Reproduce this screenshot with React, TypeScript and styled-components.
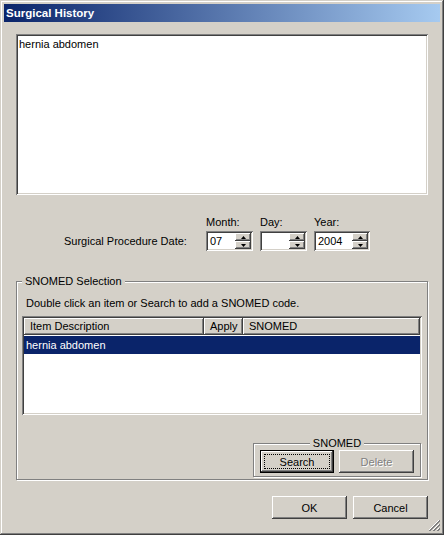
import React from 'react'
import styled, { createGlobalStyle } from 'styled-components'

const Color = {
  FACE: '#d4d0c8',
  LIGHT: '#ffffff',
  SHADOW: '#808080',
  DARK: '#404040',
  SELECT: '#0a246a',
  TITLE_FROM: '#0a246a',
  TITLE_TO: '#a6caf0',
}

const raised = `box-shadow: inset -1px -1px ${Color.DARK}, inset 1px 1px ${Color.LIGHT}, inset -2px -2px ${Color.SHADOW}, inset 2px 2px ${Color.FACE};`
const sunken = `box-shadow: inset 1px 1px ${Color.SHADOW}, inset -1px -1px ${Color.LIGHT}, inset 2px 2px ${Color.DARK}, inset -2px -2px ${Color.FACE};`

const GlobalStyle = createGlobalStyle`
  html, body {
    margin: 0;
    padding: 0;
    background: ${Color.FACE};
  }
  body {
    font-family: 'Liberation Sans', Arial, sans-serif;
    font-size: 11px;
    color: #000;
  }
`

type SpinProps = {
  value: string
  width: number
}

const SpinBox: React.FC<SpinProps> = (props) => {
  return (
    <SpinWrap width={props.width}>
      <SpinValue>{props.value}</SpinValue>
      <SpinButtons>
        <SpinButton>
          <svg width="5" height="3" viewBox="0 0 5 3">
            <path d="M2.5 0 L5 3 L0 3 Z" fill="#000" />
          </svg>
        </SpinButton>
        <SpinButton>
          <svg width="5" height="3" viewBox="0 0 5 3">
            <path d="M0 0 L5 0 L2.5 3 Z" fill="#000" />
          </svg>
        </SpinButton>
      </SpinButtons>
    </SpinWrap>
  )
}

const App: React.FC = () => {
  return (
    <>
      <GlobalStyle />
      <Window>
        <TitleBar>Surgical History</TitleBar>
        <Body>
          <TextBox>hernia abdomen</TextBox>

          <DateRow>
            <DateLabel>Surgical Procedure Date:</DateLabel>
            <DateField>
              <FieldLabel>Month:</FieldLabel>
              <SpinBox value="07" width={47} />
            </DateField>
            <DateField>
              <FieldLabel>Day:</FieldLabel>
              <SpinBox value="" width={47} />
            </DateField>
            <DateField>
              <FieldLabel>Year:</FieldLabel>
              <SpinBox value="2004" width={56} />
            </DateField>
          </DateRow>

          <GroupBox>
            <Legend>SNOMED Selection</Legend>
            <Hint>Double click an item or Search to add a SNOMED code.</Hint>
            <ListView>
              <ListHeader>
                <HeaderCell width={180}>Item Description</HeaderCell>
                <HeaderCell width={39}>Apply</HeaderCell>
                <HeaderCell>SNOMED</HeaderCell>
              </ListHeader>
              <ListBody>
                <ListRow selected>hernia abdomen</ListRow>
              </ListBody>
            </ListView>
            <InnerGroup>
              <InnerLegend>SNOMED</InnerLegend>
              <ButtonRow>
                <Button width={74} focused>
                  <FocusRect>Search</FocusRect>
                </Button>
                <Button width={75} disabled>
                  Delete
                </Button>
              </ButtonRow>
            </InnerGroup>
          </GroupBox>

          <Footer>
            <Button width={75}>OK</Button>
            <Button width={75}>Cancel</Button>
          </Footer>
        </Body>
        <Grip>
          <svg width="12" height="12" viewBox="0 0 12 12">
            <path d="M11 1 L1 11 M11 5 L5 11 M11 9 L9 11" stroke="#fff" strokeWidth="1" />
            <path d="M12 1 L1 12 M12 2 L2 12 M12 5 L5 12 M12 6 L6 12 M12 9 L9 12 M12 10 L10 12" stroke="#808080" strokeWidth="1" />
          </svg>
        </Grip>
      </Window>
    </>
  )
}

const Window = styled.div`
  position: relative;
  width: 444px;
  height: 535px;
  box-sizing: border-box;
  padding: 4px;
  display: flex;
  flex-direction: column;
  background: ${Color.FACE};
  box-shadow: inset -1px -1px ${Color.DARK}, inset 1px 1px ${Color.FACE},
    inset -2px -2px ${Color.SHADOW}, inset 2px 2px ${Color.LIGHT};
`
const TitleBar = styled.div`
  height: 18px;
  line-height: 18px;
  padding-left: 2px;
  font-weight: bold;
  font-size: 11.5px;
  color: #fff;
  background: linear-gradient(to right, ${Color.TITLE_FROM}, ${Color.TITLE_TO});
`
const Body = styled.div`
  flex: 1;
  display: flex;
  flex-direction: column;
  padding: 12px 12px 0 12px;
`
const TextBox = styled.div`
  height: 161px;
  box-sizing: border-box;
  padding: 4px 3px;
  background: #fff;
  ${sunken}
`
const DateRow = styled.div`
  display: flex;
  align-items: flex-end;
  gap: 7px;
  margin-top: 21px;
  padding-left: 48px;
`
const DateLabel = styled.div`
  width: 135px;
  height: 20px;
  line-height: 20px;
`
const DateField = styled.div`
  display: flex;
  flex-direction: column;
  gap: 2px;
`
const FieldLabel = styled.div`
  height: 13px;
  line-height: 13px;
`
const SpinWrap = styled.div<{ width: number }>`
  width: ${({ width }) => width}px;
  height: 20px;
  box-sizing: border-box;
  padding: 2px;
  display: flex;
  background: #fff;
  ${sunken}
`
const SpinValue = styled.div`
  flex: 1;
  padding-left: 2px;
  line-height: 16px;
`
const SpinButtons = styled.div`
  width: 16px;
  display: flex;
  flex-direction: column;
`
const SpinButton = styled.div`
  flex: 1;
  display: flex;
  align-items: center;
  justify-content: center;
  background: ${Color.FACE};
  ${raised}
`
const GroupBox = styled.fieldset`
  margin: 23px 0 0 0;
  padding: 0 5px 1px 5px;
  height: 206px;
  box-sizing: border-box;
  border: 1px solid ${Color.SHADOW};
  box-shadow: inset 1px 1px ${Color.LIGHT}, 1px 1px ${Color.LIGHT};
  display: flex;
  flex-direction: column;
  min-width: 0;
`
const Legend = styled.legend`
  padding: 0 3px;
  margin-left: 0;
  line-height: 14px;
  background: ${Color.FACE};
`
const Hint = styled.div`
  padding: 9px 0 0 4px;
  height: 22px;
  box-sizing: border-box;
`
const ListView = styled.div`
  margin-top: 6px;
  height: 99px;
  box-sizing: border-box;
  padding: 2px;
  display: flex;
  flex-direction: column;
  background: #fff;
  ${sunken}
`
const ListHeader = styled.div`
  display: flex;
  height: 17px;
`
const HeaderCell = styled.div<{ width?: number }>`
  ${({ width }) => (width ? `width: ${width}px;` : 'flex: 1;')}
  box-sizing: border-box;
  padding-left: 6px;
  line-height: 17px;
  background: ${Color.FACE};
  ${raised}
`
const ListBody = styled.div`
  flex: 1;
  padding-top: 1px;
`
const ListRow = styled.div<{ selected?: boolean }>`
  height: 18px;
  line-height: 18px;
  padding-left: 2px;
  color: ${({ selected }) => (selected ? '#fff' : '#000')};
  background: ${({ selected }) => (selected ? Color.SELECT : 'transparent')};
`
const InnerGroup = styled.fieldset`
  margin: 21px 1px 0 auto;
  padding: 0 6px 3px 6px;
  width: 167px;
  box-sizing: border-box;
  border: 1px solid ${Color.SHADOW};
  box-shadow: inset 1px 1px ${Color.LIGHT}, 1px 1px ${Color.LIGHT};
`
const InnerLegend = styled.legend`
  margin: 0 auto;
  padding: 0 3px;
  line-height: 14px;
  background: ${Color.FACE};
`
const ButtonRow = styled.div`
  display: flex;
  gap: 5px;
`
const Button = styled.div<{ width: number; focused?: boolean; disabled?: boolean }>`
  width: ${({ width }) => width}px;
  height: 23px;
  box-sizing: border-box;
  display: flex;
  align-items: center;
  justify-content: center;
  background: ${Color.FACE};
  color: ${({ disabled }) => (disabled ? Color.SHADOW : '#000')};
  text-shadow: ${({ disabled }) => (disabled ? `1px 1px ${Color.LIGHT}` : 'none')};
  border: ${({ focused }) => (focused ? '1px solid #000' : 'none')};
  ${raised}
`
const FocusRect = styled.div`
  width: calc(100% - 6px);
  height: calc(100% - 6px);
  box-sizing: border-box;
  display: flex;
  align-items: center;
  justify-content: center;
  border: 1px dotted #000;
`
const Footer = styled.div`
  display: flex;
  justify-content: flex-end;
  gap: 6px;
  margin-top: 16px;
`
const Grip = styled.div`
  position: absolute;
  right: 4px;
  bottom: 4px;
  width: 12px;
  height: 12px;
`

export default App
